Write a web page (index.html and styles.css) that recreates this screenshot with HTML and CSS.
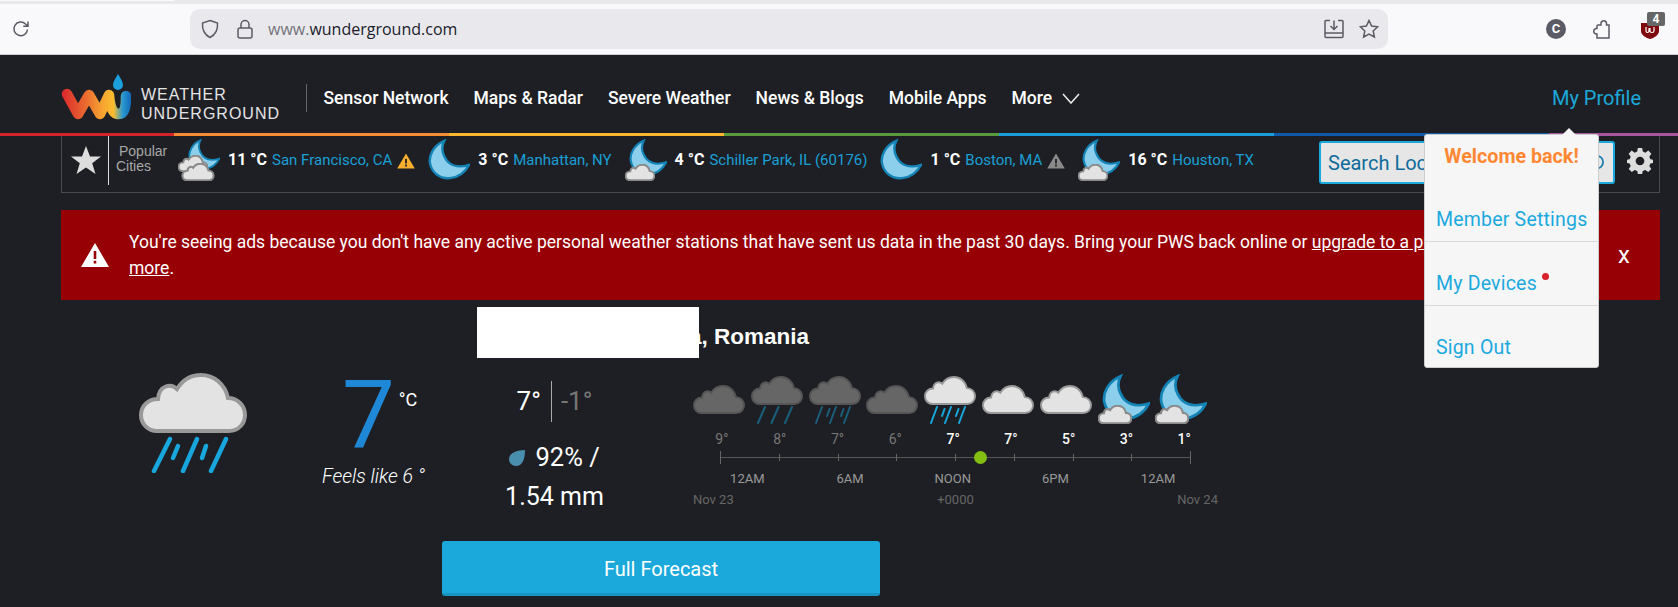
FILE: index.html
```html
<!DOCTYPE html>
<html lang="en">
<head>
    <meta charset="UTF-8">
    <meta name="viewport" content="width=device-width, initial-scale=1.0">
    <title>Weather Underground</title>
    <link rel="stylesheet" href="styles.css">
</head>
<body>

    <svg class="icon-defs" aria-hidden="true">
        <defs>
            <linearGradient id="wuGrad" gradientUnits="userSpaceOnUse" x1="0" y1="0" x2="70" y2="0">
                <stop offset="0" stop-color="#d9252c"/>
                <stop offset="0.35" stop-color="#ea6a30"/>
                <stop offset="0.6" stop-color="#f7a531"/>
                <stop offset="0.75" stop-color="#f9bc2f"/>
                <stop offset="0.88" stop-color="#2a9ad0"/>
                <stop offset="1" stop-color="#1468b8"/>
            </linearGradient>
        </defs>
        <symbol id="cloud" viewBox="0 0 108 60">
            <path d="M18 58H90C100 58 106 50 106 42C106 32 98 25 89 25C86 11 75 2 62 2C51 2 43 8 38 16C32 10 20 12 19 26C9 26 2 33 2 42C2 51 9 58 18 58Z"/>
        </symbol>
        <symbol id="moon" viewBox="0 0 44 44">
            <path d="M17 2C5 7 1 18 2 25C4 36 13 42 23 41C32 40 39 35 43 27C30 31 21 27 17 18C14 12 15 6 17 2Z"/>
        </symbol>
        <symbol id="rain3" viewBox="0 0 52 18">
            <path d="M14 1L7 17M27.500 1L20.500 17M41 1L34 17"/>
        </symbol>
        <symbol id="rain5" viewBox="0 0 52 18">
            <path d="M13 1L7 17M27 1L21 17M41 1L35 17"/>
            <path d="M20.500 3L18 10M34.500 3L32 10"/>
        </symbol>
        <symbol id="warn" viewBox="0 0 18 16">
            <path d="M9 0.500L17.800 15.500H0.200Z"/>
            <path class="warn-mark" d="M8.100 6H9.900V10.500H8.100ZM8.100 11.600H9.900V13.400H8.100Z"/>
        </symbol>
    </svg>

    <div class="browser">
        <div class="tab-strip"><div class="tab-edge"></div></div>
        <div class="toolbar">
            <svg class="tb-icon reload" viewBox="0 0 20 20"><path d="M16.500 10.500A6.800 6.800 0 1 1 14.500 5L16.800 7M17 2.500V7.300H12.300"/></svg>
            <div class="urlbar">
                <svg class="tb-icon" viewBox="0 0 20 20"><path d="M10 1.500L17.500 4C18 11 15 16 10 18.500C5 16 2 11 2.500 4Z"/></svg>
                <svg class="tb-icon lock" viewBox="0 0 18 20"><rect x="2" y="9" width="14" height="10" rx="2"/><path d="M5 9V5.500A4 4 0 0 1 13 5.500V9"/></svg>
                <div class="url"><span class="url-dim">www.</span>wunderground.com</div>
                <svg class="tb-icon save" viewBox="0 0 20 20"><path d="M6 1.500H2A1 1 0 0 0 1 2.500V17.500A1 1 0 0 0 2 18.500H18A1 1 0 0 0 19 17.500V2.500A1 1 0 0 0 18 1.500H14M1 14H19M10 1.500V10M6.500 7L10 10.500L13.500 7"/></svg>
                <svg class="tb-icon" viewBox="0 0 20 20"><path d="M10 1.500L12.600 7L18.700 7.800L14.200 12L15.400 18L10 15L4.600 18L5.800 12L1.300 7.800L7.400 7Z"/></svg>
            </div>
            <div class="ext-c">C</div>
            <svg class="tb-icon puzzle" viewBox="0 0 20 20"><path d="M6 6H9V4A2.800 2.800 0 0 1 14.500 4V6H17V19H5V15H4A2.800 2.800 0 0 1 4 9.500H5V7A1 1 0 0 1 6 6Z"/></svg>
            <div class="ublock">
                <svg viewBox="0 0 18 17"><path class="ublock-shield" d="M0 1H18V9C18 13 13 16 9 17C5 16 0 13 0 9Z"/><path class="ublock-mark" d="M5 5V9C5 11 8 11 8 9V6M9 6V9C9 11 13 11 13 9V5"/></svg>
                <span class="ublock-badge">4</span>
            </div>
        </div>
    </div>

    <div class="site">
        <header class="site-header">
            <a class="logo">
                <svg class="logo-mark" viewBox="0 0 70 46">
                    <path d="M6 20L17 40L28 21L39 40L48 21C49 34 52 40 57.500 40C64 40 65 32 65 22" fill="none" stroke="url(#wuGrad)" stroke-width="10.500" stroke-linejoin="round" stroke-linecap="round"/>
                    <path class="logo-drop" d="M57 0C54 5 52 8 52 11A5 5 0 0 0 62 11C62 8 60 5 57 0Z"/>
                </svg>
                <div class="logo-text">WEATHER<br>UNDERGROUND</div>
            </a>
            <nav class="main-nav">
                <a>Sensor Network</a>
                <a>Maps &amp; Radar</a>
                <a>Severe Weather</a>
                <a>News &amp; Blogs</a>
                <a>Mobile Apps</a>
                <a>More</a>
                <svg class="chevron" viewBox="0 0 18 11"><path d="M1 1L9 10L17 1"/></svg>
            </nav>
            <a class="profile-link">My Profile</a>
        </header>

        <div class="rainbow">
            <span class="rb-red"></span>
            <span class="rb-orange"></span>
            <span class="rb-yellow"></span>
            <span class="rb-green"></span>
            <span class="rb-blue"></span>
            <span class="rb-navy"></span>
            <span class="rb-purple"></span>
        </div>

        <div class="cities-bar">
            <svg class="fav-star" viewBox="0 0 30 28"><path d="M15 0L19 10.500H30L21.200 17.300L24.500 28L15 21.500L5.500 28L8.800 17.300L0 10.500H11Z"/></svg>
            <div class="popular"><span class="popular-top">Popular</span><span>Cities</span></div>
            <div class="cities">
                <div class="city">
                    <svg class="city-icon" viewBox="0 0 42 42">
                        <use class="moon-fill" href="#moon" x="10" y="0" width="32" height="32"/>
                        <use class="cloud-shade" href="#cloud" x="0" y="16" width="30" height="17"/>
                        <use class="cloud-shade" href="#cloud" x="3" y="24" width="34" height="18"/>
                    </svg>
                    <span class="city-temp">11 °C</span>
                    <a class="city-name">San Francisco, CA</a>
                    <svg class="city-warn warn-amber"><use href="#warn"/></svg>
                </div>
                <div class="city">
                    <svg class="city-icon" viewBox="0 0 42 42"><use class="moon-fill" href="#moon" width="42" height="42"/></svg>
                    <span class="city-temp">3 °C</span>
                    <a class="city-name">Manhattan, NY</a>
                </div>
                <div class="city">
                    <svg class="city-icon" viewBox="0 0 42 42">
                        <use class="moon-fill" href="#moon" x="4" y="0" width="38" height="38"/>
                        <use class="cloud-shade" href="#cloud" x="0" y="25" width="30" height="17"/>
                    </svg>
                    <span class="city-temp">4 °C</span>
                    <a class="city-name">Schiller Park, IL (60176)</a>
                </div>
                <div class="city">
                    <svg class="city-icon" viewBox="0 0 42 42"><use class="moon-fill" href="#moon" width="42" height="42"/></svg>
                    <span class="city-temp">1 °C</span>
                    <a class="city-name">Boston, MA</a>
                    <svg class="city-warn warn-grey"><use href="#warn"/></svg>
                </div>
                <div class="city">
                    <svg class="city-icon" viewBox="0 0 42 42">
                        <use class="moon-fill" href="#moon" x="4" y="0" width="38" height="38"/>
                        <use class="cloud-shade" href="#cloud" x="0" y="25" width="30" height="17"/>
                    </svg>
                    <span class="city-temp">16 °C</span>
                    <a class="city-name">Houston, TX</a>
                </div>
            </div>
            <div class="search-box">
                <span>Search Locations</span>
                <svg class="search-icon" viewBox="0 0 20 20"><circle cx="12" cy="9" r="7"/><path d="M7 14L1 20"/></svg>
            </div>
            <svg class="gear" viewBox="0 0 24 24"><path fill-rule="evenodd" d="M10 0H14L14.600 3.300L16.900 4.300L19.700 2.400L22.500 5.200L20.600 8L21.600 10.300L24 10.800V13.800L21.600 14.300L20.600 16.600L22.400 19.400L19.600 22.200L16.800 20.400L14.500 21.300L14 24H10L9.500 21.300L7.200 20.400L4.400 22.200L1.600 19.400L3.400 16.600L2.400 14.300L0 13.800V10.800L2.400 10.300L3.400 8L1.500 5.200L4.300 2.400L7.100 4.300L9.400 3.300ZM12 8A4 4 0 1 0 12 16A4 4 0 1 0 12 8Z"/></svg>
        </div>

        <div class="ad-notice">
            <svg class="ad-warn" viewBox="0 0 28 24"><path fill-rule="evenodd" d="M14 0L28 24H0ZM12.700 8V16H15.300V8ZM12.700 17.800V20.500H15.300V17.800Z"/></svg>
            <p class="ad-text">You're seeing ads because you don't have any active personal weather stations that have sent us data in the past 30 days. Bring your PWS back online or <a>upgrade to a premium plan to learn<br>more</a>.</p>
            <span class="ad-close">x</span>
        </div>

        <div class="conditions">
            <svg class="now-icon" viewBox="0 0 108 100">
                <use class="cloud-lit" href="#cloud" width="108" height="60"/>
                <path class="rain-big" d="M31 66L15 98M58 66L44 98M87 66L72 98"/>
                <path class="rain-big" d="M39 73L34 85M67 73L63 85"/>
            </svg>
            <div class="now-temp">
                <div class="now-reading"><span class="now-value">7</span><span class="now-unit">°C</span></div>
                <div class="feels">Feels like 6 °</div>
            </div>
            <div class="cond-main">
                <h1 class="place"><span class="redacted"></span><span class="place-rest">a, Romania</span></h1>
                <div class="cond-row">
                    <div class="stats">
                        <div class="hi-lo"><span class="hi">7°</span><span class="lo">-1°</span></div>
                        <div class="precip"><svg class="precip-drop" viewBox="0 0 16 16"><path d="M16 0C16 10 13 16 7 16C3 16 0 13 0 9C0 3 8 0 16 0Z"/></svg> <span class="precip-pct">92% /</span><br>1.54 mm</div>
                    </div>
                    <div class="hourly">
                        <div class="hours">
                            <svg class="hour-icon" viewBox="0 0 52 50"><use class="cloud-dim" href="#cloud" y="11" width="52" height="29"/></svg>
                            <svg class="hour-icon" viewBox="0 0 52 50"><use class="cloud-dim" href="#cloud" y="2" width="52" height="29"/><use class="rain-dim" href="#rain3" y="32" width="52" height="18"/></svg>
                            <svg class="hour-icon" viewBox="0 0 52 50"><use class="cloud-dim" href="#cloud" y="2" width="52" height="29"/><use class="rain-dim" href="#rain5" y="32" width="52" height="18"/></svg>
                            <svg class="hour-icon" viewBox="0 0 52 50"><use class="cloud-dim" href="#cloud" y="11" width="52" height="29"/></svg>
                            <svg class="hour-icon" viewBox="0 0 52 50"><use class="cloud-lit" href="#cloud" y="2" width="52" height="29"/><use class="rain-lit" href="#rain5" y="32" width="52" height="18"/></svg>
                            <svg class="hour-icon" viewBox="0 0 52 50"><use class="cloud-lit" href="#cloud" y="11" width="52" height="29"/></svg>
                            <svg class="hour-icon" viewBox="0 0 52 50"><use class="cloud-lit" href="#cloud" y="11" width="52" height="29"/></svg>
                            <svg class="hour-icon" viewBox="0 0 52 50"><use class="moon-fill" href="#moon" x="4" y="0" width="48" height="48"/><use class="cloud-shade" href="#cloud" y="31" width="34" height="19"/></svg>
                            <svg class="hour-icon" viewBox="0 0 52 50"><use class="moon-fill" href="#moon" x="4" y="0" width="48" height="48"/><use class="cloud-shade" href="#cloud" y="31" width="34" height="19"/></svg>
                            <span class="hour-temp past">9°</span>
                            <span class="hour-temp past">8°</span>
                            <span class="hour-temp past">7°</span>
                            <span class="hour-temp past">6°</span>
                            <span class="hour-temp">7°</span>
                            <span class="hour-temp">7°</span>
                            <span class="hour-temp">5°</span>
                            <span class="hour-temp">3°</span>
                            <span class="hour-temp">1°</span>
                        </div>
                        <div class="axis">
                            <i class="tick tick-end"></i>
                            <i class="tick"></i>
                            <i class="tick"></i>
                            <i class="tick"></i>
                            <i class="tick"></i>
                            <i class="tick"></i>
                            <i class="tick"></i>
                            <i class="tick"></i>
                            <i class="tick tick-end"></i>
                            <span class="now-dot"></span>
                        </div>
                        <div class="axis-labels">
                            <span>12AM</span>
                            <span>6AM</span>
                            <span>NOON</span>
                            <span>6PM</span>
                            <span>12AM</span>
                        </div>
                        <div class="axis-dates">
                            <span>Nov 23</span>
                            <span>+0000</span>
                            <span>Nov 24</span>
                        </div>
                    </div>
                </div>
            </div>
        </div>

        <a class="forecast-btn">Full Forecast</a>

        <div class="profile-menu">
            <div class="welcome">Welcome back!</div>
            <a class="menu-item">Member Settings</a>
            <a class="menu-item">My Devices<span class="menu-dot"></span></a>
            <a class="menu-item">Sign Out</a>
        </div>
    </div>

</body>
</html>
```

FILE: styles.css
```css
body {
    margin: 0;
    background-color: #1e1f24;
    font-family: Roboto, sans-serif;
    color: #fff;
}

.icon-defs {
    position: absolute;
    width: 0;
    height: 0;
}

/* browser chrome */
.tab-strip {
    height: 4px;
    background-color: #e9e9ec;
}
.tab-edge {
    width: 174px;
    height: 1px;
    background-color: #fafafa;
}
.toolbar {
    display: flex;
    align-items: center;
    height: 50px;
    background-color: #f9f9fb;
    border-bottom: 1px solid #cfcfd3;
}
.tb-icon {
    width: 20px;
    height: 20px;
    fill: none;
    stroke: #5b5b66;
    stroke-width: 1.5;
    flex-shrink: 0;
}
.reload {
    margin-left: 11px;
}
.urlbar {
    display: flex;
    align-items: center;
    width: 1198px;
    height: 40px;
    margin-left: 159px;
    padding: 0 9px 0 10px;
    box-sizing: border-box;
    background-color: #e9e9ed;
    border-radius: 10px;
}
.lock {
    margin-left: 16px;
    width: 18px;
}
.url {
    flex: 1;
    margin-left: 14px;
    font-family: "Open Sans", sans-serif;
    font-size: 16px;
    color: #20202a;
}
.url-dim {
    color: #74747c;
}
.save {
    margin-right: 15px;
}
.ext-c {
    width: 20px;
    height: 20px;
    margin-left: 158px;
    border-radius: 50%;
    background-color: #5b5b66;
    color: #fff;
    font-size: 13px;
    font-weight: 700;
    line-height: 20px;
    text-align: center;
}
.puzzle {
    margin-left: 26px;
}
.ublock {
    position: relative;
    width: 18px;
    height: 18px;
    margin-left: 29px;
    margin-top: 3px;
}
.ublock-shield {
    fill: #7f0a0e;
}
.ublock-mark {
    fill: none;
    stroke: #fff;
    stroke-width: 1.2;
}
.ublock-badge {
    position: absolute;
    top: -10px;
    left: 6px;
    width: 18px;
    height: 14px;
    border-radius: 2px;
    background-color: #666;
    color: #fff;
    font-size: 12px;
    font-weight: 700;
    line-height: 14px;
    text-align: center;
}

/* site header */
.site {
    position: relative;
}
.site-header {
    display: flex;
    align-items: center;
    height: 78px;
    padding: 8px 0 0 61px;
    box-sizing: border-box;
}
.logo {
    display: flex;
    align-items: flex-end;
    width: 245px;
    height: 46px;
    margin-top: -2px;
}
.logo-mark {
    width: 70px;
    height: 46px;
    flex-shrink: 0;
}
.logo-drop {
    fill: #1ba0dc;
}
.logo-text {
    margin: 0 0 -3px 10px;
    font-family: "Liberation Sans", sans-serif;
    font-size: 16px;
    letter-spacing: 1px;
    line-height: 18.500px;
    color: #e4e4e4;
    white-space: nowrap;
}
.main-nav {
    display: flex;
    align-items: center;
    gap: 25px;
    height: 28px;
    padding-left: 16.500px;
    border-left: 1px solid #666;
    font-size: 17.500px;
    font-weight: 500;
}
.chevron {
    width: 18px;
    height: 11px;
    margin-left: -15px;
    fill: none;
    stroke: #eee;
    stroke-width: 1.500;
}
.profile-link {
    margin-left: auto;
    margin-right: 37px;
    color: #1ba9db;
    font-size: 20px;
}

.rainbow {
    display: flex;
    height: 3px;
}
.rainbow span {
    flex: 0 0 275px;
}
.rainbow .rb-red {
    flex-basis: 174px;
    background-color: #d3242b;
}
.rb-orange { background-color: #f58c33; }
.rb-yellow { background-color: #fbb62f; }
.rb-green { background-color: #5a9b3f; }
.rb-blue { background-color: #1a9cd8; }
.rb-navy { background-color: #0f5aa8; }
.rainbow .rb-purple {
    flex: 1;
    background-color: #a8559b;
}

/* popular cities */
.cities-bar {
    display: flex;
    align-items: flex-start;
    height: 56px;
    margin: 0 18px 0 61px;
    border: 1px solid #4a4a4e;
    border-top: 0;
}
.fav-star {
    width: 30px;
    height: 28px;
    margin: 10px 7px 0 9px;
    fill: #ddd;
}
.popular {
    display: flex;
    flex-direction: column;
    width: 70px;
    height: 49px;
    padding-top: 8px;
    box-sizing: border-box;
    padding-left: 7px;
    border-left: 1px solid #ddd;
    font-family: "Liberation Sans", sans-serif;
    font-size: 14px;
    line-height: 15px;
    color: #a8a8a8;
}
.popular-top {
    padding-left: 3px;
}
.cities {
    display: flex;
    gap: 13px;
    margin-top: 3px;
}
.city {
    display: flex;
    align-items: center;
    height: 41px;
    font-size: 15px;
}
.city-icon {
    width: 42px;
    height: 42px;
    margin-right: 8px;
}
.city-temp {
    margin-right: 5px;
    font-size: 16px;
    font-weight: 700;
}
.city-name {
    color: #1a9fd6;
}
.city-warn {
    width: 18px;
    height: 16px;
    margin: 0 0 -2px 5px;
}
.warn-amber { fill: #f9ae2e; }
.warn-grey { fill: #8a8a8a; }
.warn-mark { fill: #1e1f24; }
.moon-fill {
    fill: #8ccfec;
    stroke: #1483b5;
    stroke-width: 2.500;
}
.cloud-shade {
    fill: #e3e3e3;
    stroke: #8a8a8a;
    stroke-width: 7;
}
.search-box {
    display: flex;
    align-items: center;
    justify-content: space-between;
    width: 296px;
    height: 43px;
    margin: 5px 0 0 auto;
    padding: 0 9px 0 7px;
    box-sizing: border-box;
    background-color: #e6e6e6;
    border: 2px solid #1ba9db;
    border-radius: 3px;
    color: #0f6b9b;
    font-size: 20px;
}
.search-icon {
    width: 18px;
    height: 18px;
    fill: none;
    stroke: #1f7fae;
    stroke-width: 2;
}
.gear {
    width: 26px;
    height: 26px;
    margin: 12px 6px 0 12px;
    fill: #ddd;
}

/* ad notice */
.ad-notice {
    display: flex;
    align-items: center;
    height: 90px;
    margin: 17px 18px 0 61px;
    background-color: #970005;
}
.ad-warn {
    width: 28px;
    height: 24px;
    margin-left: 20px;
    fill: #fff;
    flex-shrink: 0;
}
.ad-text {
    flex: 1;
    margin: 0 0 0 20px;
    font-size: 17.500px;
    line-height: 26px;
}
.ad-text a {
    text-decoration: underline;
}
.ad-close {
    margin: 0 30px 0 10px;
    font-size: 24px;
}

/* current conditions */
.conditions {
    display: flex;
    align-items: flex-start;
    margin-top: 7px;
    padding-left: 139px;
}
.now-icon {
    width: 108px;
    height: 100px;
    margin-top: 66px;
    flex-shrink: 0;
}
.cloud-lit {
    fill: #e3e3e3;
    stroke: #999;
    stroke-width: 4;
}
.rain-big {
    fill: none;
    stroke: #17a7dc;
    stroke-width: 4.500;
    stroke-linecap: round;
}
.now-temp {
    width: 155px;
    margin: 60px 0 0 75px;
}
.now-reading {
    display: flex;
    align-items: flex-start;
    margin-left: 20px;
}
.now-value {
    color: #1f88d6;
    font-size: 94px;
    line-height: 96px;
}
.now-unit {
    margin: 22px 0 0 4px;
    font-size: 18px;
}
.feels {
    margin-top: 2px;
    font-size: 19.500px;
    font-style: italic;
    font-weight: 300;
    white-space: nowrap;
}
.place {
    display: flex;
    align-items: center;
    height: 51px;
    margin: 0;
    font-family: "Liberation Sans", sans-serif;
    font-size: 22.500px;
    font-weight: 700;
}
.redacted {
    position: relative;
    z-index: 1;
    width: 222px;
    height: 51px;
    background-color: #fff;
}
.place-rest {
    margin: 9px 0 0 -10px;
}
.cond-row {
    display: flex;
}
.stats {
    width: 155px;
    margin-top: 23px;
    text-align: center;
}
.hi-lo {
    display: flex;
    justify-content: center;
    font-size: 26px;
    line-height: 41px;
}
.hi {
    padding-right: 10px;
    border-right: 1px solid #aaa;
    margin-right: 9px;
}
.lo {
    color: #777;
}
.precip {
    margin-top: 16px;
    font-size: 25px;
    line-height: 39px;
}
.precip-pct {
    font-size: 25.500px;
}
.precip-drop {
    width: 16px;
    height: 16px;
    margin-right: 4px;
    fill: #4a8eae;
}

/* hourly strip */
.hourly {
    width: 525px;
    margin: 16px 0 0 61px;
}
.hours {
    display: grid;
    grid-template-columns: repeat(9, 57.800px);
    justify-items: start;
}
.hour-icon {
    width: 52px;
    height: 50px;
}
.cloud-dim {
    fill: #666;
    stroke: #555;
    stroke-width: 4;
}
.rain-dim {
    fill: none;
    stroke: #1b5e7c;
    stroke-width: 2;
    stroke-linecap: round;
}
.rain-lit {
    fill: none;
    stroke: #17a7dc;
    stroke-width: 2;
    stroke-linecap: round;
}
.hour-temp {
    justify-self: center;
    margin-top: 7px;
    font-size: 14px;
    font-weight: 500;
    line-height: 16px;
}
.past {
    color: #777;
    font-weight: 400;
}
.axis {
    position: relative;
    display: flex;
    justify-content: space-between;
    align-items: center;
    width: 471px;
    height: 13px;
    margin: 4px 0 0 27px;
    background: linear-gradient(#555, #555) center / 100% 1px no-repeat;
}
.tick {
    width: 1px;
    height: 7px;
    background-color: #666;
}
.tick-end {
    height: 13px;
}
.now-dot {
    position: absolute;
    top: 0;
    left: 254px;
    width: 13px;
    height: 13px;
    border-radius: 50%;
    background-color: #84bd11;
}
.axis-labels {
    display: grid;
    grid-template-columns: repeat(5, 102.700px);
    margin: 7px 0 0 3px;
    font-size: 13px;
    line-height: 15px;
    text-align: center;
    color: #999;
}
.axis-dates {
    display: flex;
    justify-content: space-between;
    margin-top: 6px;
    font-size: 13px;
    line-height: 15px;
    color: #666;
}

.forecast-btn {
    display: block;
    width: 438px;
    height: 52px;
    margin: 25px 0 0 442px;
    background-color: #1ba9db;
    border-bottom: 3px solid #1794bf;
    border-radius: 3px;
    font-size: 20px;
    line-height: 56px;
    text-align: center;
}

/* dropdown over the header */
.profile-menu {
    position: absolute;
    top: 79px;
    left: 1424px;
    width: 175px;
    height: 234px;
    box-sizing: border-box;
    background-color: #f6f6f6;
    border: 1px solid #ccc;
    border-radius: 3px;
}
.profile-menu::before {
    content: "";
    position: absolute;
    top: -7px;
    left: 137px;
    border-left: 7px solid transparent;
    border-right: 7px solid transparent;
    border-bottom: 7px solid #f6f6f6;
}
.welcome {
    height: 43px;
    padding-top: 10px;
    box-sizing: border-box;
    color: #ff8833;
    font-size: 19.700px;
    font-weight: 700;
    line-height: 23px;
    text-align: center;
}
.menu-item {
    display: block;
    height: 64px;
    padding: 31px 0 0 11px;
    box-sizing: border-box;
    border-bottom: 1px solid #d8d8d8;
    color: #1ba9e0;
    font-size: 19.500px;
    line-height: 22px;
    letter-spacing: 0.2px;
}
.menu-item:last-child {
    border-bottom: 0;
}
.menu-dot {
    display: inline-block;
    width: 7px;
    height: 7px;
    margin: 0 0 16px 5px;
    border-radius: 50%;
    background-color: #d8202c;
    vertical-align: middle;
}
```
